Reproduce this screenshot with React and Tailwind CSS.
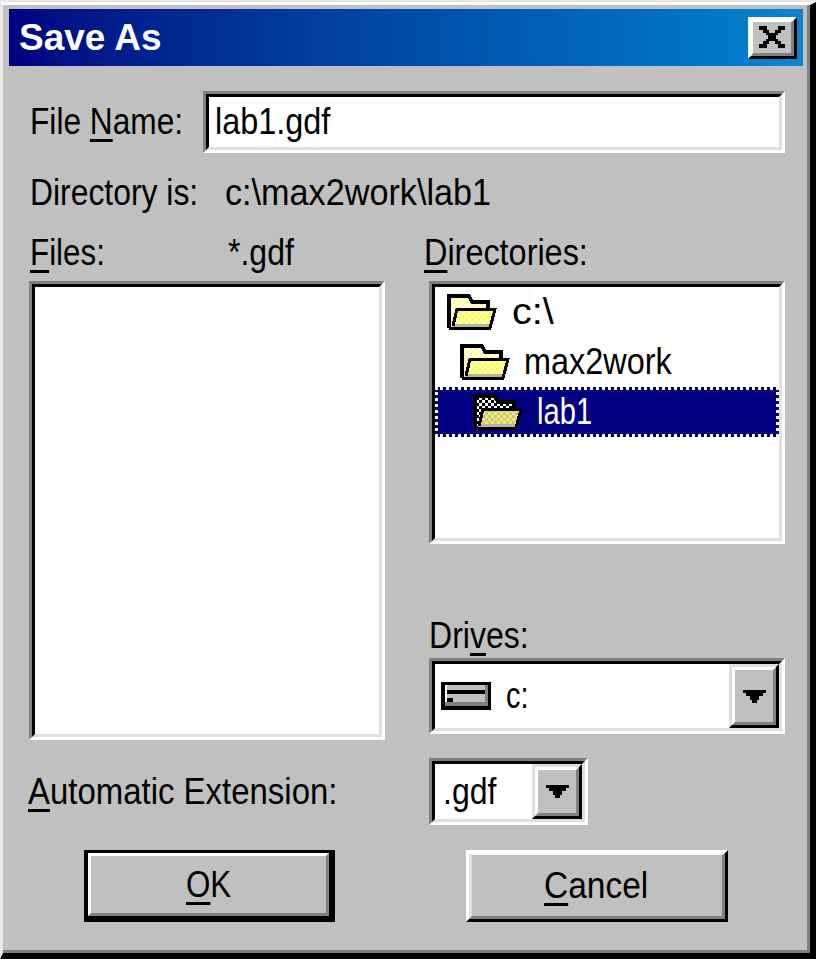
import { useId } from "react";

const Txt = ({ children, className = "", scale = "scale-x-[0.87]" }) => (
  <span className={`inline-block origin-left ${scale} whitespace-nowrap leading-none ${className}`}>
    {children}
  </span>
);

const Key = ({ children }) => (
  <span className="underline decoration-[3px] underline-offset-[5px]">{children}</span>
);

// sunken 3d box used by the text field, lists and combos
const Sunken = ({ className = "", children }) => (
  <div className={`border-[3px] border-t-[#808080] border-l-[#808080] border-r-white border-b-white ${className}`}>
    <div className="h-full border-[3px] border-t-black border-l-black border-r-[#dfdfdf] border-b-[#dfdfdf] bg-white">
      {children}
    </div>
  </div>
);

const Folder = ({ selected = false }) => {
  const id = useId();
  return (
    <svg width="50" height="36" viewBox="0 0 50 36" shapeRendering="crispEdges" className="shrink-0">
      <defs>
        <pattern id={`${id}b`} width="6" height="6" patternUnits="userSpaceOnUse">
          <rect width="6" height="6" fill="#ffffff" />
          <rect width="3" height="3" fill={selected ? "#000000" : "#ffff88"} />
          <rect x="3" y="3" width="3" height="3" fill={selected ? "#000000" : "#ffff88"} />
        </pattern>
        <pattern id={`${id}f`} width="6" height="6" patternUnits="userSpaceOnUse">
          <rect width="6" height="6" fill={selected ? "#f0e890" : "#ffffc0"} />
          <rect width="3" height="3" fill={selected ? "#d0c860" : "#ffff50"} />
          <rect x="3" y="3" width="3" height="3" fill={selected ? "#d0c860" : "#ffff50"} />
        </pattern>
      </defs>
      <path d="M2 34V3H23L26 8H41V15H10L5 32Z" fill={`url(#${id}b)`} />
      <path d="M10 15H48L42 31H5Z" fill={`url(#${id}f)`} />
      <rect x="5" y="30" width="38" height="3" fill="#b4b4a8" />
      <path d="M2 34V2H22L25 8H41V15" fill="none" stroke="#000000" strokeWidth="3.5" />
      <path d="M6 32L10 15H48L43 34H2" fill="none" stroke="#000000" strokeWidth="3" />
    </svg>
  );
};

const Drive = () => (
  <svg width="50" height="28" viewBox="0 0 50 28" shapeRendering="crispEdges" className="shrink-0">
    <rect width="50" height="28" fill="#000000" />
    <rect x="4" y="3" width="43" height="21" fill="#c0c0c0" />
    <rect x="4" y="3" width="2" height="17" fill="#ffffff" />
    <rect x="6" y="8" width="38" height="4" fill="#000000" />
    <rect x="6" y="16" width="6" height="4" fill="#000000" />
    <rect x="4" y="20" width="43" height="4" fill="#808080" />
    <rect x="44" y="3" width="3" height="21" fill="#808080" />
  </svg>
);

const ComboArrow = ({ className = "" }) => (
  <div className={`flex shrink-0 border-[3px] border-t-[#dfdfdf] border-l-[#dfdfdf] border-r-black border-b-black ${className}`}>
    <div className="flex flex-1 items-center justify-center border-[3px] border-t-white border-l-white border-r-[#808080] border-b-[#808080] bg-[#c0c0c0]">
      <svg width="23" height="13" viewBox="0 0 23 13" shapeRendering="crispEdges">
        <path d="M0 0H23V3H20V6H16V10H14V13H9V10H7V6H3V3H0Z" fill="#000000" />
      </svg>
    </div>
  </div>
);

const TreeRow = ({ indent, children, selected = false }) => (
  <div
    className={`flex h-[50px] items-center gap-[15px] ${indent} ${
      selected ? "border-[3px] border-dotted border-[#ffffc0] bg-[#000080] text-white" : ""
    }`}
  >
    {children}
  </div>
);

export default function App() {
  return (
    <div className="h-[959px] w-[816px] bg-[#e8e8e8] pt-[2px] font-['Liberation_Sans',sans-serif] text-[36px] text-black">
      <div className="h-[957px] border-t-[3px] border-r-[6px] border-b-[6px] border-l-[3px] border-t-white border-r-black border-b-black border-l-[#e8e8e8]">
        <div className="h-full border-r-[3px] border-b-[3px] border-[#808080] bg-[#c0c0c0] pt-[4px] pr-[4px] pl-[6px]">
          {/* title bar */}
          <div className="flex h-[57px] items-center justify-between bg-gradient-to-r from-[#000080] to-[#1084d0] pr-[6px] pl-[10px]">
            <span className="text-[37px] leading-none font-bold whitespace-nowrap text-white">Save As</span>
            <button className="flex h-[42px] w-[49px] border-[3px] border-t-white border-r-black border-b-black border-l-white">
              <span className="flex flex-1 items-center justify-center border-t-[2px] border-r-[3px] border-b-[3px] border-l-[2px] border-t-white border-r-[#808080] border-b-[#808080] border-l-white bg-[#c0c0c0]">
                <svg width="26" height="22" viewBox="0 0 28 24" shapeRendering="crispEdges">
                  <path d="M0 0H8V4H11V8H17V4H20V0H28V4H24V8H21V10H18V14H21V16H24V20H28V24H20V20H17V16H11V20H8V24H0V20H4V16H7V14H10V10H7V8H4V4H0Z" fill="#000000" />
                </svg>
              </span>
            </button>
          </div>

          <div className="pr-[18px] pl-[20px]">
            {/* file name */}
            <div className="mt-[25px] flex h-[62px] items-center">
              <div className="w-[174px] pl-[1px]">
                <Txt scale="scale-x-[0.88]">
                  File <Key>N</Key>ame:
                </Txt>
              </div>
              <Sunken className="h-full flex-1">
                <div className="flex h-full items-center pl-[6px]">
                  <Txt scale="scale-x-[0.9]">lab1.gdf</Txt>
                </div>
              </Sunken>
            </div>

            {/* current directory */}
            <div className="mt-[22px] flex h-[36px] items-center pl-[1px]">
              <Txt scale="scale-x-[0.885]" className="w-[195px]">Directory is:</Txt>
              <Txt scale="scale-x-[0.95]">c:\max2work\lab1</Txt>
            </div>

            {/* lists */}
            <div className="mt-[24px] grid grid-cols-[356px_356px] gap-x-[44px]">
              <div>
                <div className="flex h-[46px] items-start pl-[1px]">
                  <Txt className="w-[198px]">
                    <Key>F</Key>iles:
                  </Txt>
                  <Txt scale="scale-x-[0.89]">*.gdf</Txt>
                </div>
                <Sunken className="h-[459px]" />
              </div>
              <div>
                <div className="-ml-[5px] flex h-[46px] items-start">
                  <Txt scale="scale-x-[0.9]">
                    <Key>D</Key>irectories:
                  </Txt>
                </div>
                <Sunken className="h-[263px]">
                  <TreeRow indent="pl-[12px]">
                    <Folder />
                    <Txt scale="scale-x-[1.1]">c:\</Txt>
                  </TreeRow>
                  <TreeRow indent="pl-[25px]">
                    <Folder />
                    <Txt scale="scale-x-[0.9]" className="-ml-[1px]">max2work</Txt>
                  </TreeRow>
                  <TreeRow indent="pl-[35px]" selected>
                    <Folder selected />
                    <Txt scale="scale-x-[0.81]" className="-ml-[1px]">lab1</Txt>
                  </TreeRow>
                </Sunken>
                <div className="mt-[74px] flex h-[40px] items-start">
                  <Txt scale="scale-x-[0.89]">
                    Dri<Key>v</Key>es:
                  </Txt>
                </div>
                <Sunken className="h-[76px]">
                  <div className="flex h-full items-stretch">
                    <div className="flex flex-1 items-center gap-[15px] pl-[6px]">
                      <Drive />
                      <Txt scale="scale-x-[0.8]">c:</Txt>
                    </div>
                    <ComboArrow className="w-[50px]" />
                  </div>
                </Sunken>
              </div>
            </div>

            {/* automatic extension */}
            <div className="mt-[18px] grid h-[67px] grid-cols-[356px_356px] gap-x-[44px]">
              <div className="-ml-[1px] flex items-center">
                <Txt scale="scale-x-[0.915]">
                  <Key>A</Key>utomatic Extension:
                </Txt>
              </div>
              <Sunken className="h-full w-[159px]">
                <div className="flex h-full items-stretch">
                  <div className="flex flex-1 items-center pl-[8px]">
                    <Txt scale="scale-x-[0.89]">.gdf</Txt>
                  </div>
                  <ComboArrow className="w-[50px]" />
                </div>
              </Sunken>
            </div>

            {/* buttons */}
            <div className="mt-[25px] ml-[55px] flex gap-[131px]">
              <button className="flex h-[72px] w-[251px] border-t-[3px] border-r-[6px] border-b-[6px] border-l-[4px] border-black">
                <span className="flex flex-1 items-center border-[3px] border-t-white border-r-[#808080] border-b-[#808080] border-l-white bg-[#c0c0c0] pl-[95px]">
                  <Txt>
                    <Key>O</Key>K
                  </Txt>
                </span>
              </button>
              <button className="flex h-[72px] w-[262px] border-[3px] border-t-white border-r-black border-b-black border-l-white">
                <span className="flex flex-1 items-center border-t-[2px] border-r-[3px] border-b-[3px] border-l-[3px] border-t-white border-r-[#808080] border-b-[#808080] border-l-[#dfdfdf] bg-[#c0c0c0] pl-[72px]">
                  <Txt scale="scale-x-[0.93]">
                    <Key>C</Key>ancel
                  </Txt>
                </span>
              </button>
            </div>
          </div>
        </div>
      </div>
    </div>
  );
}
